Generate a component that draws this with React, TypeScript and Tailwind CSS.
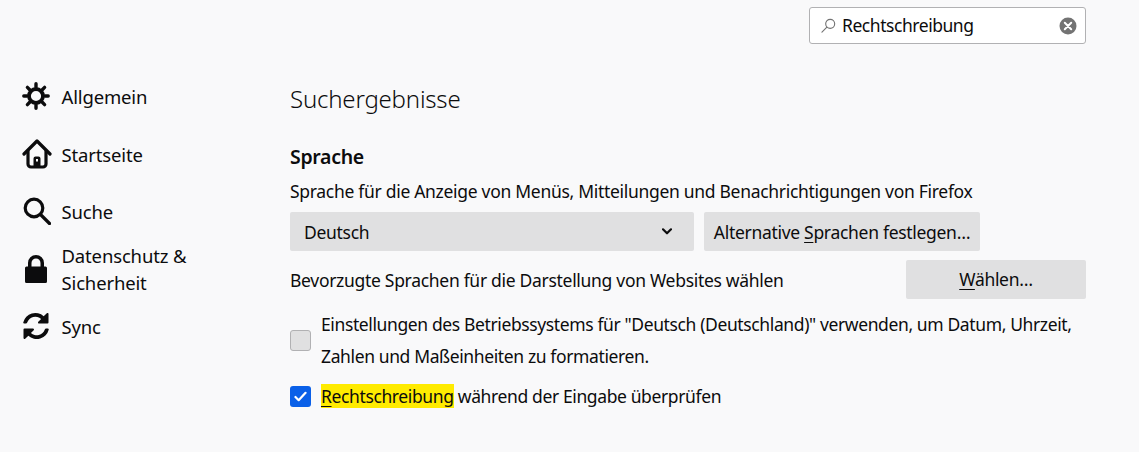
const Gear = () => (
  <svg viewBox="0 0 28 28" className="w-[28px] h-[28px]" fill="none" stroke="#0c0c0d" strokeLinecap="round">
    <circle cx="14" cy="14" r="7" strokeWidth="3.800" />
    <path strokeWidth="3.400" d="M14 1.800v3.200M14 23v3.200M1.800 14H5M23 14h3.200M5.400 5.400l2.300 2.300M20.300 20.300l2.300 2.300M22.600 5.400l-2.300 2.300M7.700 20.300l-2.300 2.300" />
  </svg>
);
const Home = () => (
  <svg viewBox="0 0 30 30" className="w-[30px] h-[30px]" fill="none" stroke="#0c0c0d" strokeWidth="3.200" strokeLinecap="round" strokeLinejoin="round">
    <path d="M2 15 15 2l13 13" />
    <path d="M6 12v13a3 3 0 0 0 3 3h12a3 3 0 0 0 3-3V12" />
    <path fillRule="evenodd" d="M11.500 28V19.500a2 2 0 0 1 2-2h3a2 2 0 0 1 2 2V28zM14 20v2.500h2V20z" fill="#0c0c0d" stroke="none" />
  </svg>
);
const Search = () => (
  <svg viewBox="0 0 28 28" className="w-[28px] h-[28px]" fill="none" stroke="#0c0c0d" strokeWidth="3.200" strokeLinecap="round">
    <circle cx="11" cy="11" r="8.800" />
    <path d="M17.500 17.500 26.500 26.500" />
  </svg>
);
const Lock = () => (
  <svg viewBox="0 0 24 28" className="w-[24px] h-[28px]" fill="#0c0c0d">
    <path fillRule="evenodd" d="M12 0a8 8 0 0 0-8 8v3.500H2.500A1.500 1.500 0 0 0 1 13v13.500A1.500 1.500 0 0 0 2.500 28h19a1.500 1.500 0 0 0 1.500-1.500V13a1.500 1.500 0 0 0-1.500-1.500H20V8a8 8 0 0 0-8-8zM7.500 11.500V8a4.500 4.500 0 0 1 9 0v3.500z" />
  </svg>
);
const Sync = () => (
  <svg viewBox="0 0 28 28" className="w-[28px] h-[28px]" fill="#0c0c0d">
    <path d="M26.500 2v8.500a1 1 0 0 1-1 1H17a1 1 0 0 1-.7-1.700l2.800-2.800A8.500 8.500 0 0 0 5.200 10.500 1.500 1.500 0 0 1 3.700 11.500H2.300a1 1 0 0 1-1-1.200A12.400 12.400 0 0 1 21.700 4.200l3.100-2.900a1 1 0 0 1 1.700.7z" />
    <path d="M1.500 26v-8.500a1 1 0 0 1 1-1H11a1 1 0 0 1 .7 1.700l-2.800 2.800a8.500 8.500 0 0 0 13.900-3.500 1.500 1.500 0 0 1 1.500-1h1.400a1 1 0 0 1 1 1.200A12.400 12.400 0 0 1 6.300 23.800l-3.100 2.900a1 1 0 0 1-1.700-.7z" />
  </svg>
);

function NavItem({ icon, children, h, box }: { icon: React.ReactNode; children: React.ReactNode; h: string; box?: string }) {
  return (
    <div className={`flex items-center ${h}`}>
      <div className={`w-[39.500px] flex items-center justify-start shrink-0 ${box ?? ""}`}>{icon}</div>
      <div className="leading-[27px] text-[18.500px] tracking-[-0.15px]">{children}</div>
    </div>
  );
}

export default function App() {
  return (
    <div className="w-[1139px] h-[452px] overflow-hidden bg-[#f9f9fa] text-[#0c0c0d] text-[17.500px] font-['Noto_Sans','Open_Sans',sans-serif] tracking-[-0.3px] flex flex-col">
      <div className="flex justify-end pt-[7px] pr-[53px]">
        <div className="w-[277px] h-[37px] bg-white border border-[#b1b1b3] rounded-[3px] flex items-center pl-[11px] pr-[8px]">
          <svg viewBox="0 0 16 16" className="w-[15px] h-[15px] shrink-0" fill="none" stroke="#737373" strokeWidth="1.200" strokeLinecap="round">
            <circle cx="9.800" cy="6.200" r="4.800" />
            <path d="M6.300 9.700 1 15" />
          </svg>
          <span className="ml-[6px] flex-1 tracking-[-0.45px]">Rechtschreibung</span>
          <svg viewBox="0 0 18 18" className="w-[18px] h-[18px]">
            <circle cx="9" cy="9" r="8.500" fill="#737373" />
            <path d="M5.800 5.800l6.400 6.400M12.200 5.800l-6.400 6.400" stroke="#fff" strokeWidth="2" strokeLinecap="round" />
          </svg>
        </div>
      </div>
      <div className="flex mt-[38px] flex-1">
        <nav className="w-[290px] pl-[22px] shrink-0 flex flex-col">
          <NavItem h="h-[28px]" icon={<Gear />}>Allgemein</NavItem>
          <NavItem h="h-[30px] mt-[29px]" icon={<Home />}>Startseite</NavItem>
          <NavItem h="h-[28px] mt-[28px]" box="pl-[1px]" icon={<Search />}>Suche</NavItem>
          <NavItem h="h-[54px] mt-[17px]" box="pl-[2px]" icon={<Lock />}>
            <span className="block w-[140px]">Datenschutz &amp; Sicherheit</span>
          </NavItem>
          <NavItem h="h-[28px] mt-[16px]" icon={<Sync />}>Sync</NavItem>
        </nav>
        <main className="w-[796px] pt-[1px]">
          <h1 className="text-[24px] leading-[32px] font-light tracking-[-0.2px]">Suchergebnisse</h1>
          <h2 className="mt-[28px] font-semibold text-[19.500px] leading-[28px]">Sprache</h2>
          <p className="mt-[7px] leading-[26px] whitespace-nowrap">Sprache für die Anzeige von Menüs, Mitteilungen und Benachrichtigungen von Firefox</p>
          <div className="flex mt-[8px] gap-[10px]">
            <div className="w-[404px] h-[39px] bg-[#e0e0e1] rounded-[2px] flex items-center justify-between pl-[14px] pr-[22px]">
              <span className="pt-[2px]">Deutsch</span>
              <svg viewBox="0 0 10 7" className="w-[10px] h-[7px]" fill="none" stroke="#0c0c0d" strokeWidth="2.200" strokeLinecap="round" strokeLinejoin="round">
                <path d="M1 1.300 5 5.300 9 1.300" />
              </svg>
            </div>
            <button className="w-[276px] h-[39px] bg-[#e0e0e1] rounded-[2px] text-center pt-[2px]">
              Alternative <span className="underline underline-offset-[3px]">S</span>prachen festlegen…
            </button>
          </div>
          <div className="flex items-center justify-between mt-[9px]">
            <span className="pt-[2px]">Bevorzugte Sprachen für die Darstellung von Websites wählen</span>
            <button className="w-[180px] h-[39px] bg-[#e0e0e1] rounded-[2px] text-center">
              <span className="underline underline-offset-[3px]">W</span>ählen…
            </button>
          </div>
          <div className="flex items-center mt-[9px]">
            <div className="w-[21px] h-[21px] bg-[#e0e0e1] border border-[#b1b1b3] rounded-[3px] shrink-0" />
            <p className="ml-[10px] leading-[32px] whitespace-nowrap tracking-[-0.38px]">
              Einstellungen des Betriebssystems für "Deutsch (Deutschland)" verwenden, um Datum, Uhrzeit,<br />Zahlen und Maßeinheiten zu formatieren.
            </p>
          </div>
          <div className="flex items-center mt-[12px]">
            <div className="w-[21px] h-[21px] bg-[#0a60e8] rounded-[3px] shrink-0 flex items-center justify-center">
              <svg viewBox="0 0 14 12" className="w-[13px] h-[11px]" fill="none" stroke="#fff" strokeWidth="2.400" strokeLinecap="round" strokeLinejoin="round">
                <path d="M1.500 6.500 5 10 12.500 2" />
              </svg>
            </div>
            <p className="ml-[10px] leading-[24px] tracking-[-0.38px]">
              <span className="bg-[#ffeb00] inline-block"><span className="underline underline-offset-[3px]">R</span>echtschreibung</span> während der Eingabe überprüfen
            </p>
          </div>
        </main>
      </div>
    </div>
  );
}
